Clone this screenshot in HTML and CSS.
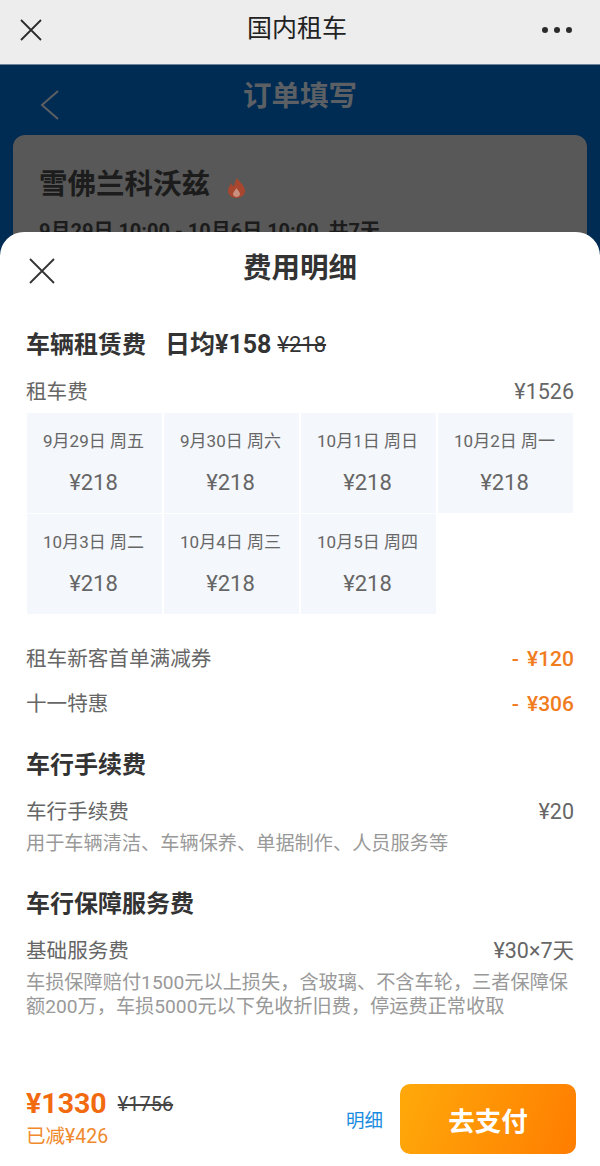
FILE: index.html
```html
<!DOCTYPE html>
<html>
<head>
  <title>国内租车</title>
  <meta name="viewport" content="width=device-width, initial-scale=1.0">
  <link rel="stylesheet" href="styles.css">
</head>
<body>
  <div class="nav">
    <svg class="nav-close" width="24" height="24" viewBox="0 0 24 24"><path d="M2 2 L22 22 M22 2 L2 22" stroke="#2b2b2b" stroke-width="1.8" fill="none"/></svg>
    <div class="nav-title">国内租车</div>
    <div class="nav-more"><span></span><span></span><span></span></div>
  </div>

  <div class="page">
    <div class="page-head">
      <svg class="back" width="20" height="32" viewBox="0 0 20 32"><path d="M18 2 L2 16 L18 30" stroke="#5c6064" stroke-width="2" fill="none"/></svg>
      <div class="page-title">订单填写</div>
    </div>
    <div class="car-card">
      <div class="car-name">雪佛兰科沃兹
        <svg class="fire" width="19" height="20" viewBox="0 0 19 20"><path d="M10 0 C11 3 18 7 18 13 C18 17 14 20 9.5 20 C5 20 1 17 1 13 C1 10 3 7 4.5 5 C5 7 6 8 7 8 C8 5 8 3 10 0 Z" fill="#a8462f"/><path d="M9.5 10 C10.5 12 13 14 13 16 C13 18 11 19 9.5 19 C8 19 6 18 6 16 C6 14 8.5 12 9.5 10 Z" fill="#c9907f"/></svg>
      </div>
      <div class="car-time">9月29日 10:00 - 10月6日 10:00&nbsp;&nbsp;共7天</div>
    </div>
  </div>

  <div class="sheet">
    <div class="sheet-head">
      <svg class="sheet-close" width="26" height="26" viewBox="0 0 26 26"><path d="M1 1 L25 25 M25 1 L1 25" stroke="#333" stroke-width="1.8" fill="none"/></svg>
      <div class="sheet-title">费用明细</div>
    </div>

    <div class="section-title rent-title">车辆租赁费<span class="avg">日均¥158</span><s class="avg-old">¥218</s></div>
    <div class="row rent-row"><span>租车费</span><span class="num">¥1526</span></div>

    <div class="days">
      <div class="day"><div class="day-date">9月29日 周五</div><div class="day-price">¥218</div></div>
      <div class="day"><div class="day-date">9月30日 周六</div><div class="day-price">¥218</div></div>
      <div class="day"><div class="day-date">10月1日 周日</div><div class="day-price">¥218</div></div>
      <div class="day"><div class="day-date">10月2日 周一</div><div class="day-price">¥218</div></div>
      <div class="day"><div class="day-date">10月3日 周二</div><div class="day-price">¥218</div></div>
      <div class="day"><div class="day-date">10月4日 周三</div><div class="day-price">¥218</div></div>
      <div class="day"><div class="day-date">10月5日 周四</div><div class="day-price">¥218</div></div>
    </div>

    <div class="row discount first"><span>租车新客首单满减券</span><span class="minus">- ¥120</span></div>
    <div class="row discount"><span>十一特惠</span><span class="minus">- ¥306</span></div>

    <div class="section-title fee-title">车行手续费</div>
    <div class="row fee-row"><span>车行手续费</span><span class="num">¥20</span></div>
    <div class="note">用于车辆清洁、车辆保养、单据制作、人员服务等</div>

    <div class="section-title cover-title">车行保障服务费</div>
    <div class="row fee-row"><span>基础服务费</span><span class="num">¥30×7天</span></div>
    <div class="note">车损保障赔付1500元以上损失，含玻璃、不含车轮，三者保障保额200万，车损5000元以下免收折旧费，停运费正常收取</div>

    <div class="pay-bar">
      <div class="pay-left">
        <div class="pay-total"><span class="pay-now">¥1330</span><s class="pay-old">¥1756</s></div>
        <div class="pay-saved">已减¥426</div>
      </div>
      <div class="pay-detail">明细</div>
      <button class="pay-btn">去支付</button>
    </div>
  </div>
</body>
</html>
```

FILE: styles.css
```css
body {
  margin: 0;
  width: 600px;
  height: 1166px;
  position: relative;
  overflow: hidden;
  background-color: #002c54;
  font-family: Roboto, "Noto Sans CJK SC", sans-serif;
}
.nav {
  height: 65px;
  background-color: #ededed;
  border-bottom: 1px solid #6f8498;
  box-sizing: border-box;
  display: flex;
  align-items: center;
  justify-content: space-between;
  padding: 0 41px 4px 19px;
  position: relative;
}
.nav-title {
  position: absolute;
  left: 0;
  right: 6px;
  top: 9px;
  text-align: center;
  font-size: 25px;
  line-height: 40px;
  color: #222;
}
.nav-more {
  display: flex;
  gap: 6px;
  margin-right: -13px;
}
.nav-more span {
  width: 6px;
  height: 6px;
  border-radius: 50%;
  background-color: #2b2b2b;
}
.page {
  padding: 0 13px;
}
.page-head {
  height: 70px;
  position: relative;
}
.back {
  position: absolute;
  left: 27px;
  top: 24px;
}
.page-title {
  text-align: center;
  font-size: 28.5px;
  font-weight: 700;
  line-height: 40px;
  padding-top: 12px;
  color: #5c6064;
}
.car-card {
  height: 140px;
  background-color: #585858;
  border-radius: 12px;
  padding: 28px 26px 0;
  color: #1c1c1c;
}
.car-name {
  font-size: 28.5px;
  font-weight: 700;
  line-height: 44px;
  display: flex;
  align-items: center;
}
.fire {
  margin-left: 17px;
  margin-top: 5px;
}
.car-time {
  font-size: 20px;
  font-weight: 700;
  line-height: 30px;
  margin-top: 9px;
}
.sheet {
  position: absolute;
  left: 0;
  right: 0;
  top: 232px;
  bottom: 0;
  background-color: #fff;
  border-radius: 24px 24px 0 0;
  padding: 0 26px;
}
.sheet-head {
  height: 70px;
  position: relative;
}
.sheet-close {
  position: absolute;
  left: 3px;
  top: 26px;
}
.sheet-title {
  text-align: center;
  font-size: 28.5px;
  font-weight: 700;
  line-height: 40px;
  padding-top: 17px;
  color: #333;
}
.section-title {
  font-size: 24px;
  font-weight: 700;
  line-height: 34px;
  color: #333;
}
.rent-title {
  margin-top: 26px;
  display: flex;
  align-items: center;
}
.avg {
  margin-left: 19px;
  font-size: 25px;
}
.avg-old {
  margin-left: 6px;
  font-size: 22px;
  font-weight: 400;
}
.row {
  display: flex;
  justify-content: space-between;
  font-size: 20.6px;
  line-height: 30px;
  color: #666;
}
.num {
  font-size: 21.5px;
}
.rent-row {
  margin-top: 15px;
}
.days {
  display: grid;
  grid-template-columns: repeat(4, 135px);
  column-gap: 2px;
  row-gap: 1px;
  margin: 6px 0 0 1px;
}
.day {
  height: 100px;
  background-color: #f4f7fb;
  text-align: center;
  color: #666;
}
.day-date {
  font-size: 17px;
  line-height: 24px;
  padding-top: 16px;
  margin-left: -2px;
}
.day-price {
  font-size: 22px;
  line-height: 30px;
  margin-top: 15px;
  margin-left: -2px;
}
.discount {
  margin-top: 15px;
}
.discount.first {
  margin-top: 30px;
}
.minus {
  color: #f07c1e;
  font-size: 21px;
  font-weight: 500;
  word-spacing: 3px;
}
.fee-title {
  margin-top: 29px;
}
.fee-row {
  margin-top: 15px;
}
.cover-title {
  margin-top: 31px;
}
.note {
  font-size: 19.2px;
  line-height: 24px;
  color: #999;
  margin-top: 5px;
}
.pay-bar {
  position: absolute;
  left: 26px;
  right: 24px;
  bottom: 12px;
  height: 70px;
  display: flex;
  align-items: center;
}
.pay-left {
  flex: 1;
}
.pay-total {
  display: flex;
  align-items: center;
  margin-top: -2px;
}
.pay-now {
  font-size: 28.5px;
  font-weight: 700;
  line-height: 36px;
  color: #f26a0f;
}
.pay-old {
  margin-left: 11px;
  font-size: 20px;
  color: #444;
}
.pay-saved {
  font-size: 19.5px;
  line-height: 26px;
  color: #f08a2c;
  margin-top: 2px;
}
.pay-detail {
  font-size: 18.5px;
  color: #1a8ce0;
  margin-right: 17px;
}
.pay-btn {
  width: 176px;
  height: 70px;
  border: none;
  border-radius: 10px;
  background-image: linear-gradient(110deg, #ffa90a, #ff7d00);
  color: #fff;
  font-family: inherit;
  font-size: 26.5px;
  font-weight: 700;
}
```
